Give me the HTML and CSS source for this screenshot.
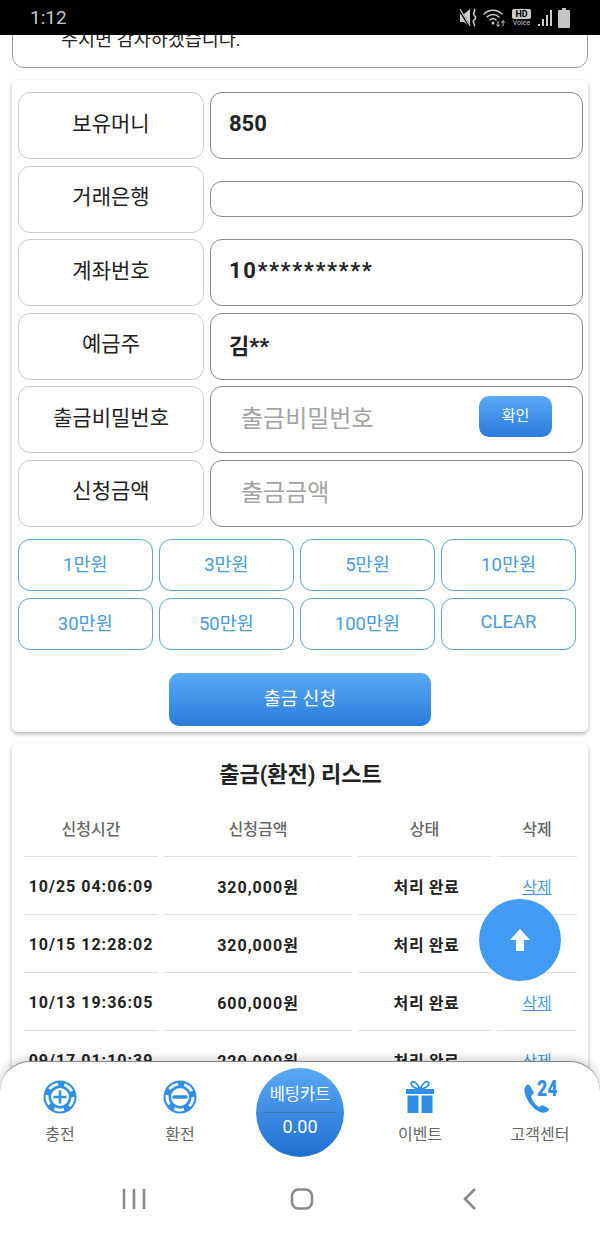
FILE: index.html
```html
<!DOCTYPE html>
<html lang="ko">
<head>
    <meta charset="UTF-8">
    <meta name="viewport" content="width=device-width, initial-scale=1.0">
    <title>출금 신청</title>
    <link rel="stylesheet" href="styles.css">
</head>
<body>
<div class="screen">

    <div class="status-bar">
        <span class="clock">1:12</span>
        <div class="status-icons">
            <svg width="19" height="20" viewBox="0 0 19 20">
                <path d="M1 6h4l6-5v18l-6-5H1z" fill="#ccc"/>
                <path d="M0 1l11 18" stroke="#000" stroke-width="2.400"/>
                <path d="M1 1l10 17" stroke="#ccc" stroke-width="1.200"/>
                <path d="M15 1c2.500 2-2 4 0 6s2.500 3 0 5 2 4 0 6" fill="none" stroke="#ccc" stroke-width="1.600"/>
            </svg>
            <svg width="23" height="20" viewBox="0 0 23 20">
                <g fill="none" stroke="#ccc" stroke-width="1.400" stroke-linecap="round">
                    <path d="M1 6c5-5 13-5 18 0"/>
                    <path d="M4 9c3.500-3.400 8.500-3.400 12 0"/>
                    <path d="M7 12c2-2 4-2 6 0"/>
                </g>
                <circle cx="10" cy="15" r="1.500" fill="#ccc"/>
                <path d="M15 13v5M13.500 16.500l1.500 2 1.500-2M20 18v-5M18.500 14.500l1.500-2 1.500 2" fill="none" stroke="#ccc" stroke-width="1"/>
            </svg>
            <div class="hd-voice">
                <span class="hd">HD</span>
                <span class="voice">Voice</span>
            </div>
            <svg width="16" height="18" viewBox="0 0 16 18">
                <rect x="1" y="15" width="2" height="2" fill="#ccc"/>
                <rect x="5" y="10" width="2" height="7" fill="#ccc"/>
                <rect x="9" y="6" width="2" height="11" fill="#ccc"/>
                <rect x="13" y="1" width="2" height="16" fill="#ccc"/>
            </svg>
            <svg width="12" height="20" viewBox="0 0 12 20">
                <path d="M4 0h4v2h3a1 1 0 0 1 1 1v16a1 1 0 0 1-1 1H1a1 1 0 0 1-1-1V3a1 1 0 0 1 1-1h3z" fill="#c4c4c4"/>
            </svg>
        </div>
    </div>

    <div class="content">
        <div class="notice">
            <p>주시면 감사하겠습니다.</p>
        </div>

        <div class="card form-card">
            <div class="form-grid">
                <div class="label">보유머니</div>
                <div class="field value">850</div>
                <div class="label">거래은행</div>
                <div class="field short"></div>
                <div class="label">계좌번호</div>
                <div class="field value masked">10**********</div>
                <div class="label">예금주</div>
                <div class="field value">김**</div>
                <div class="label">출금비밀번호</div>
                <div class="field placeholder">
                    출금비밀번호
                    <button class="btn-confirm">확인</button>
                </div>
                <div class="label">신청금액</div>
                <div class="field placeholder">출금금액</div>
            </div>

            <div class="amount-grid">
                <button class="amount">1만원</button>
                <button class="amount">3만원</button>
                <button class="amount">5만원</button>
                <button class="amount">10만원</button>
                <button class="amount">30만원</button>
                <button class="amount">50만원</button>
                <button class="amount">100만원</button>
                <button class="amount">CLEAR</button>
            </div>

            <button class="btn-submit">출금 신청</button>
        </div>

        <div class="card list-card">
            <h2>출금(환전) 리스트</h2>
            <table>
                <colgroup>
                    <col class="col-time">
                    <col class="col-money">
                    <col class="col-state">
                    <col class="col-del">
                </colgroup>
                <thead>
                    <tr><th>신청시간</th><th>신청금액</th><th>상태</th><th>삭제</th></tr>
                </thead>
                <tbody>
                    <tr><td>10/25 04:06:09</td><td>320,000원</td><td class="state">처리 완료</td><td><a href="#">삭제</a></td></tr>
                    <tr><td>10/15 12:28:02</td><td>320,000원</td><td class="state">처리 완료</td><td><a href="#">삭제</a></td></tr>
                    <tr><td>10/13 19:36:05</td><td>600,000원</td><td class="state">처리 완료</td><td><a href="#">삭제</a></td></tr>
                    <tr><td>09/17 01:10:39</td><td>220,000원</td><td class="state">처리 완료</td><td><a href="#">삭제</a></td></tr>
                </tbody>
            </table>
        </div>
    </div>

    <button class="scroll-top">
        <svg width="22" height="24" viewBox="0 0 22 24"><path d="M11 1l10 11h-6v11H7V12H1z" fill="#fff"/></svg>
    </button>

    <div class="bottom-nav">
        <div class="tabs">
            <div class="tab">
                <svg width="34" height="34" viewBox="0 0 34 34">
                    <circle cx="17" cy="17" r="16.500" fill="#2f8fe6"/>
                    <circle cx="17" cy="17" r="13" fill="none" stroke="#fff" stroke-width="3" stroke-dasharray="10 6.300"/>
                    <circle cx="17" cy="17" r="10" fill="#fff" stroke="#2f8fe6" stroke-width="2"/>
                    <path d="M17 10.500v13M10.500 17h13" stroke="#2f8fe6" stroke-width="2.600"/>
                </svg>
                <span>충전</span>
            </div>
            <div class="tab">
                <svg width="34" height="34" viewBox="0 0 34 34">
                    <circle cx="17" cy="17" r="16.500" fill="#2f8fe6"/>
                    <circle cx="17" cy="17" r="13" fill="none" stroke="#fff" stroke-width="3" stroke-dasharray="10 6.300"/>
                    <circle cx="17" cy="17" r="10" fill="#fff" stroke="#2f8fe6" stroke-width="2"/>
                    <path d="M11 17h12" stroke="#2f8fe6" stroke-width="3.400" stroke-linecap="round"/>
                </svg>
                <span>환전</span>
            </div>
            <div class="tab tab-cart">
                <div class="cart">
                    <span class="cart-title">베팅카트</span>
                    <span class="cart-value">0.00</span>
                </div>
            </div>
            <div class="tab">
                <svg width="30" height="34" viewBox="0 0 30 34">
                    <path d="M15 9C12 3 9 1 7 2s-1 6 8 7zM15 9c3-6 6-8 8-7s1 6-8 7z" fill="none" stroke="#2f8fe6" stroke-width="1.800"/>
                    <rect x="1" y="9" width="28" height="5" fill="#2f8fe6"/>
                    <rect x="2.500" y="15.500" width="11" height="17.500" fill="#2f8fe6"/>
                    <rect x="16.500" y="15.500" width="11" height="17.500" fill="#2f8fe6"/>
                </svg>
                <span>이벤트</span>
            </div>
            <div class="tab">
                <div class="phone-icon">
                    <svg width="34" height="34" viewBox="0 0 34 34">
                        <path d="M3 6c-2 2-2 5-1 8 2 7 8 15 15 18 3 1 6 1 8-1 1-1 1-2 0-3l-4-2c-1-1-2-1-3 0l-2 1c-4-2-7-7-8-11l2-2c1-1 1-2 0-3L7 6C6 4 4 4 3 6z" fill="#2f8fe6"/>
                    </svg>
                    <b class="phone-24">24</b>
                </div>
                <span>고객센터</span>
            </div>
        </div>
        <div class="system-nav">
            <svg width="24" height="22" viewBox="0 0 24 22"><path d="M2 1v20M12 1v20M22 1v20" stroke="#8a8a8a" stroke-width="2.600"/></svg>
            <svg class="home" width="24" height="22" viewBox="0 0 24 22"><rect x="2" y="1.500" width="20" height="19" rx="6.500" fill="none" stroke="#8a8a8a" stroke-width="2.600"/></svg>
            <svg width="16" height="24" viewBox="0 0 16 24"><path d="M13 2L3 12l10 10" fill="none" stroke="#8a8a8a" stroke-width="2.600"/></svg>
        </div>
    </div>
</div>
</body>
</html>
```
FILE: styles.css
```css
* {
    box-sizing: border-box;
}
body {
    margin: 0;
    font-family: Roboto, "Noto Sans CJK KR", sans-serif;
    background-color: #fff;
    color: #222;
}
button {
    font-family: inherit;
    cursor: pointer;
}
.screen {
    position: relative;
    display: flex;
    flex-direction: column;
    height: 1233px;
    overflow: hidden;
}

/* status bar */
.status-bar {
    flex: none;
    display: flex;
    justify-content: space-between;
    align-items: center;
    height: 35px;
    padding: 0 30px 0 30px;
    background-color: #000;
    color: #c8c8c8;
}
.clock {
    font-size: 19px;
}
.status-icons {
    display: flex;
    align-items: center;
    gap: 5px;
}
.hd-voice {
    display: flex;
    flex-direction: column;
    align-items: center;
    width: 21px;
}
.hd {
    width: 19px;
    height: 10px;
    border-radius: 2px;
    background-color: #c8c8c8;
    color: #000;
    font-size: 9px;
    font-weight: 700;
    line-height: 10px;
    text-align: center;
}
.voice {
    font-size: 7px;
    line-height: 8px;
}

/* page */
.content {
    flex: 1;
    overflow: hidden;
    padding: 0 12px;
}
.notice {
    height: 58px;
    margin-top: -25px;
    padding: 16px 0 0 48px;
    border: 1px solid #999;
    border-radius: 12px;
}
.notice p {
    margin: 0;
    font-size: 18.500px;
    line-height: 26px;
}
.card {
    background-color: #fff;
    border-radius: 6px;
    box-shadow: 0 2px 4px rgba(0, 0, 0, 0.3);
}
.form-card {
    margin-top: 12px;
    padding: 12px 5px 6px 6px;
}
.form-grid {
    display: grid;
    grid-template-columns: 186px 373px;
    grid-auto-rows: 67px;
    gap: 6.6px 6px;
    align-items: center;
}
.label {
    display: flex;
    justify-content: center;
    align-items: center;
    height: 100%;
    border: 1px solid #ccc;
    border-radius: 12px;
    font-size: 21px;
    padding-bottom: 8px;
}
.field {
    display: flex;
    justify-content: space-between;
    align-items: center;
    height: 100%;
    border: 1px solid #888;
    border-radius: 12px;
    padding: 0 30px 4px 18px;
}
.field.short {
    height: 36px;
    padding: 0;
}
.value {
    font-size: 22px;
    font-weight: 700;
}
.masked {
    letter-spacing: 1.600px;
}
.placeholder {
    padding-left: 30px;
    padding-bottom: 6px;
    color: #a3a3a3;
    font-size: 24px;
}
.btn-confirm {
    width: 73px;
    height: 41px;
    padding: 0 0 4px;
    border: none;
    border-radius: 10px;
    background: linear-gradient(#5aa9f5, #2a7cdc);
    color: #fff;
    font-size: 15px;
}
.amount-grid {
    display: grid;
    grid-template-columns: repeat(4, 134.500px);
    grid-auto-rows: 52px;
    gap: 7px 6.600px;
    margin-top: 12px;
}
.amount {
    padding: 0 0 4px;
    border: 1px solid #5ba4dc;
    border-radius: 12px;
    background-color: #fff;
    color: #4a9bdc;
    font-size: 18.500px;
}
.btn-submit {
    display: block;
    width: 262px;
    height: 53px;
    margin: 23px 0 0 151px;
    padding: 0 0 4px;
    border: none;
    border-radius: 10px;
    background: linear-gradient(#5aa9f5, #2a7cdc);
    color: #fff;
    font-size: 18.500px;
}

/* withdraw list */
.list-card {
    margin-top: 11px;
    padding: 0 5px 0 6px;
}
.list-card h2 {
    margin: 0;
    padding-top: 17px;
    font-size: 22px;
    font-weight: 700;
    line-height: 30px;
    text-align: center;
}
table {
    width: 565px;
    border-collapse: separate;
    border-spacing: 6px 0;
    table-layout: fixed;
    margin-top: 11px;
}
.col-time {
    width: 134px;
}
.col-money {
    width: 188px;
}
.col-state {
    width: 133px;
}
.col-del {
    width: 80px;
}
th {
    height: 56px;
    border-bottom: 1px solid #e2e2e2;
    color: #666;
    font-size: 16px;
    font-weight: 500;
    padding: 0;
}
td {
    height: 58px;
    border-bottom: 1px solid #e2e2e2;
    font-size: 16px;
    font-weight: 700;
    letter-spacing: 1px;
    text-align: center;
    white-space: nowrap;
    padding: 2px 0 0;
}
td.state {
    padding-left: 4px;
    letter-spacing: 0.6px;
}
td a {
    color: #4a9bdc;
    font-weight: 400;
    letter-spacing: 0;
}

/* floating things */
.scroll-top {
    position: absolute;
    left: 479px;
    top: 899px;
    display: flex;
    justify-content: center;
    align-items: center;
    width: 82px;
    height: 82px;
    border: none;
    border-radius: 50%;
    background-color: #429bf4;
}
.bottom-nav {
    position: absolute;
    left: 0;
    right: 0;
    bottom: 0;
    height: 172px;
    border-top: 1px solid #888;
    border-radius: 30px 30px 0 0;
    background-color: #fff;
    box-shadow: 0 -2px 10px rgba(0, 0, 0, 0.2);
}
.tabs {
    display: grid;
    grid-template-columns: repeat(5, 120px);
    height: 100px;
}
.tab {
    display: flex;
    flex-direction: column;
    align-items: center;
    padding-top: 18px;
    gap: 7px;
    color: #666;
    font-size: 16px;
}
.tab svg {
    flex: none;
    display: block;
}
.tab-cart {
    padding-top: 6px;
}
.cart {
    display: flex;
    flex-direction: column;
    align-items: center;
    width: 88px;
    height: 89px;
    border-radius: 50%;
    background: linear-gradient(#5aa9f5, #1f6fd0);
    color: #fff;
}
.cart-title {
    width: 74px;
    margin-top: 15px;
    padding-bottom: 5px;
    border-bottom: 1px solid rgba(80, 80, 80, 0.4);
    font-size: 16.500px;
    line-height: 24px;
    text-align: center;
}
.cart-value {
    font-size: 18px;
    line-height: 28px;
}
.phone-icon {
    position: relative;
    width: 34px;
    height: 34px;
}
.phone-24 {
    position: absolute;
    right: -1px;
    top: -1px;
    color: #2f8fe6;
    font-size: 22px;
    font-weight: 900;
    line-height: 20px;
    transform: scaleX(0.8);
    transform-origin: right top;
}
.system-nav {
    display: flex;
    justify-content: space-between;
    align-items: center;
    height: 34px;
    margin-top: 20px;
    padding: 0 122px;
}
.home {
    margin-right: 4px;
}
```
